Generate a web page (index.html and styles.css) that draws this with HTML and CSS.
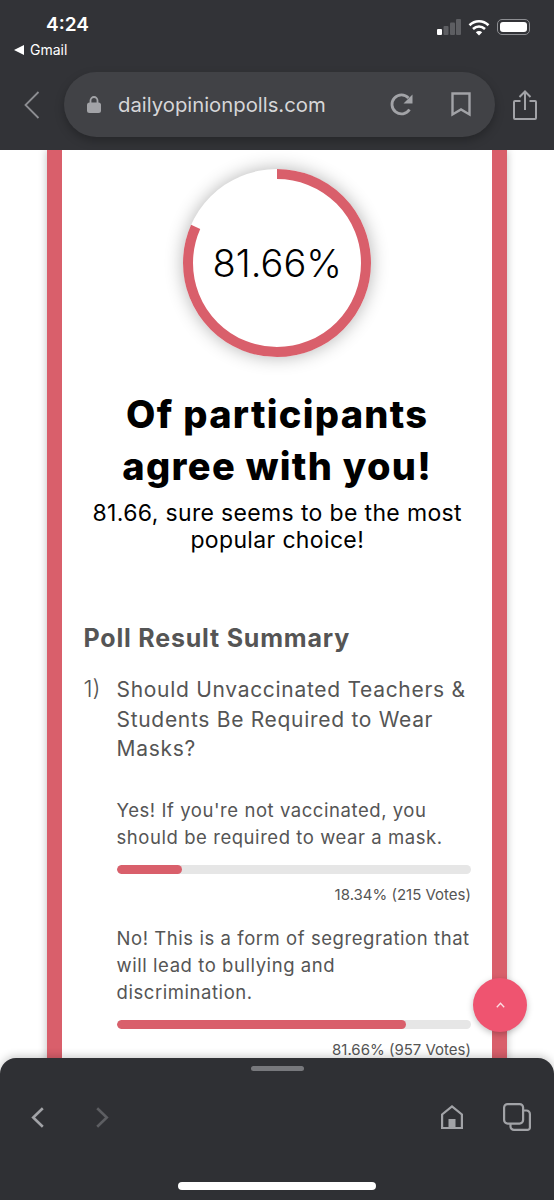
FILE: index.html
```html
<!DOCTYPE html>
<html lang="en">
  <head>
    <meta charset="UTF-8" />
    <meta name="viewport" content="width=device-width, initial-scale=1.0" />
    <title>Daily Opinion Polls</title>
    <link rel="stylesheet" href="styles.css">
  </head>
  <body>
    <header class="browser-top">
      <div class="status-bar">
        <div class="status-left">
          <div class="time">4:24</div>
          <div class="back-app"><span class="back-triangle"></span>Gmail</div>
        </div>
        <div class="status-right">
          <svg width="24" height="16" viewBox="0 0 24 16">
            <rect x="0" y="10" width="5" height="6" rx="1" fill="#fff" />
            <rect x="6.5" y="7" width="5" height="9" rx="1" fill="#5d5e62" />
            <rect x="13" y="3.5" width="5" height="12.5" rx="1" fill="#5d5e62" />
            <rect x="19" y="0" width="5" height="16" rx="1" fill="#5d5e62" />
          </svg>
          <svg width="22" height="17" viewBox="0 0 22 17" fill="none" stroke="#fff" stroke-width="2.6">
            <path d="M1.5 6.2C7 1 15 1 20.5 6.2" />
            <path d="M5 10C8.6 6.8 13.4 6.8 17 10" />
            <path d="M11 16.6 7.8 13.2C9.6 11.6 12.4 11.6 14.2 13.2Z" fill="#fff" stroke="none" />
          </svg>
          <div class="battery"><span class="battery-fill"></span></div>
        </div>
      </div>
      <div class="nav-bar">
        <svg class="nav-back" width="16" height="28" viewBox="0 0 16 28" fill="none" stroke="#8d8e92" stroke-width="1.8">
          <path d="M14.5 1 1.5 14l13 13" />
        </svg>
        <div class="url-pill">
          <svg width="14" height="17" viewBox="0 0 14 17">
            <path d="M3.5 7V4.5a3.5 3.5 0 0 1 7 0V7" fill="none" stroke="#a2a3a7" stroke-width="1.8" />
            <rect x="0" y="6.5" width="14" height="10.5" rx="2.5" fill="#a2a3a7" />
          </svg>
          <span class="url-text">dailyopinionpolls.com</span>
          <svg class="reload" width="24" height="24" viewBox="0 0 24 24" fill="none" stroke="#a2a3a7" stroke-width="2.8">
            <path d="M19.5 16.5A9.5 9.5 0 1 1 18.5 5" />
            <path d="M22.5 1.5V10.5H13.5Z" fill="#a2a3a7" stroke="none" />
          </svg>
          <svg class="bookmark" width="20" height="25" viewBox="0 0 20 25" fill="none" stroke="#a2a3a7" stroke-width="2.4">
            <path d="M1.5 1.5h17v21L10 17.5l-8.5 5Z" />
          </svg>
        </div>
        <svg class="share" width="24" height="30" viewBox="0 0 24 30" fill="none" stroke="#a2a3a7" stroke-width="2">
          <path d="M7.5 11H2a1 1 0 0 0-1 1v16a1 1 0 0 0 1 1h20a1 1 0 0 0 1-1V12a1 1 0 0 0-1-1h-5.5" />
          <path d="M12 20V2M6.5 7 12 1.5 17.5 7" />
        </svg>
      </div>
    </header>

    <main class="page">
      <div class="card">
        <div class="ring">
          <svg width="188" height="188" viewBox="0 0 188 188">
            <circle class="ring-arc" cx="94" cy="94" r="89" pathLength="100" stroke-dasharray="81.66 100" transform="rotate(-90 94 94)" />
          </svg>
          <div class="ring-value">81.66%</div>
        </div>
        <h1>Of participants<br />agree with you!</h1>
        <p class="subtitle">81.66, sure seems to be the most popular choice!</p>

        <h2>Poll Result Summary</h2>
        <div class="question">
          <span class="question-num">1)</span>
          <div class="question-body">
            <h3>Should Unvaccinated Teachers &amp; Students Be Required to Wear Masks?</h3>
            <div class="answer first">
              <p>Yes! If you're not vaccinated, you should be required to wear a mask.</p>
              <div class="bar"><div class="bar-fill" style="width: 18.34%"></div></div>
              <div class="votes">18.34% (215 Votes)</div>
            </div>
            <div class="answer">
              <p>No! This is a form of segregration that will lead to bullying and discrimination.</p>
              <div class="bar"><div class="bar-fill" style="width: 81.66%"></div></div>
              <div class="votes">81.66% (957 Votes)</div>
            </div>
          </div>
        </div>
      </div>
    </main>

    <button class="to-top">
      <svg width="9" height="6" viewBox="0 0 9 6" fill="none" stroke="#fbdfe4" stroke-width="1.3"><path d="M.8 5.2 4.5 1.2l3.700 4" /></svg>
    </button>

    <footer class="browser-bottom">
      <div class="handle"></div>
      <div class="tools">
        <div class="tools-left">
          <svg width="13" height="21" viewBox="0 0 13 21" fill="none" stroke="#a2a3a7" stroke-width="2.6"><path d="M11.8 1.2 2.2 10.5l9.6 9.3" /></svg>
          <svg width="13" height="21" viewBox="0 0 13 21" fill="none" stroke="#5d5e62" stroke-width="2.6"><path d="M1.2 1.2 10.800 10.500l-9.600 9.300" /></svg>
        </div>
        <div class="tools-right">
          <svg width="22" height="24" viewBox="0 0 22 24" fill="none" stroke="#a2a3a7" stroke-width="2.2">
            <path d="M1.1 23V9.5L11 1.500l9.900 8V23Z" />
            <rect x="7.5" y="14" width="7" height="9" fill="#a2a3a7" stroke="none" />
          </svg>
          <svg width="28" height="28" viewBox="0 0 28 28" fill="none" stroke="#a2a3a7" stroke-width="2.2">
            <rect x="1.1" y="1.1" width="19" height="19.5" rx="3.5" />
            <path d="M20.1 7.5H23.400a3.500 3.500 0 0 1 3.500 3.500v13.400a2.500 2.500 0 0 1-2.500 2.500H11a3.500 3.500 0 0 1-3.500-3.500v-2.800" />
          </svg>
        </div>
      </div>
      <div class="home-bar"></div>
    </footer>
  </body>
</html>
```

FILE: styles.css
```css
* {
  margin: 0;
  padding: 0;
  box-sizing: border-box;
}

html,
body {
  height: 1200px;
  overflow: hidden;
}

body {
  font-family: Inter, "Open Sans", sans-serif;
  background-color: #fff;
  color: #555;
  display: flex;
  flex-direction: column;
  position: relative;
}

svg {
  display: block;
  flex: none;
}

/* top browser chrome */
.browser-top {
  flex: none;
  height: 150px;
  background-color: #323337;
  color: #fff;
}

.status-bar {
  height: 72px;
  display: flex;
  justify-content: space-between;
  padding: 13px 24px 0 14px;
}

.time {
  font-size: 19px;
  font-weight: 600;
  line-height: 23px;
  padding-left: 32px;
}

.back-app {
  display: flex;
  align-items: center;
  gap: 6px;
  font-size: 14px;
  line-height: 18px;
  margin-top: 5px;
}

.back-triangle {
  width: 0;
  height: 0;
  border-top: 5px solid transparent;
  border-bottom: 5px solid transparent;
  border-right: 10px solid #fff;
}

.status-right {
  display: flex;
  align-items: center;
  gap: 7px;
  height: 28px;
}

.battery {
  width: 33px;
  height: 16px;
  border: 1px solid #8d8e92;
  border-radius: 5px;
  padding: 2px;
}

.battery-fill {
  display: block;
  height: 100%;
  background-color: #fff;
  border-radius: 3px;
}

.nav-bar {
  height: 65px;
  display: flex;
  align-items: center;
  padding-left: 24px;
}

.nav-back {
  margin-right: 24px;
}

.url-pill {
  width: 431px;
  height: 65px;
  flex: none;
  background-color: #414246;
  border-radius: 33px;
  box-shadow: 0 4px 10px rgba(0, 0, 0, 0.25);
  display: flex;
  align-items: center;
  padding-left: 23px;
}

.url-text {
  font-size: 20.3px;
  color: #d6d6d8;
  margin-left: 17px;
  width: 272px;
}

.bookmark {
  margin-left: 37px;
}

.share {
  margin-left: 18px;
}

/* page */
.page {
  flex: 1;
  min-height: 0;
  overflow: hidden;
  padding: 0 47px;
}

.card {
  border-left: 15.5px solid #d95f6b;
  border-right: 15.5px solid #d95f6b;
  box-shadow: 0 0 8px rgba(0, 0, 0, 0.25);
  background-color: #fff;
  padding: 19px 21px 0 21.5px;
  height: 1100px;
}

.ring {
  width: 188px;
  height: 188px;
  margin: 0 auto;
  border-radius: 50%;
  box-shadow: 0 0 18px rgba(0, 0, 0, 0.3);
  display: grid;
  place-items: center;
}

.ring svg,
.ring-value {
  grid-area: 1 / 1;
}

.ring-arc {
  fill: none;
  stroke: #d95f6b;
  stroke-width: 10;
}

.ring-value {
  font-size: 38px;
  font-weight: 300;
  color: #000;
}

h1 {
  font-size: 38px;
  line-height: 52px;
  font-weight: 800;
  letter-spacing: 1.3px;
  color: #000;
  text-align: center;
  margin-top: 31px;
}

.subtitle {
  font-size: 23px;
  line-height: 27px;
  letter-spacing: 0.35px;
  color: #000;
  text-align: center;
  margin-top: 8px;
}

h2 {
  font-size: 25px;
  line-height: 34px;
  font-weight: 700;
  letter-spacing: 0.8px;
  margin-top: 67px;
}

.question {
  display: flex;
  margin-top: 20px;
}

.question-num {
  flex: none;
  width: 33px;
  font-size: 23px;
  line-height: 29.5px;
  font-weight: 300;
}

.question-body {
  flex: 1;
  min-width: 0;
}

h3 {
  font-size: 21px;
  line-height: 29.5px;
  font-weight: 400;
  letter-spacing: 0.7px;
}

.answer {
  margin-top: 20px;
}

.answer.first {
  margin-top: 33px;
}

.answer p {
  font-size: 18.5px;
  line-height: 27px;
  letter-spacing: 0.56px;
}

.bar {
  height: 9px;
  margin-top: 14px;
  background-color: #e6e6e6;
  border-radius: 5px;
  overflow: hidden;
}

.bar-fill {
  height: 100%;
  background-color: #d95f6b;
  border-radius: 5px;
}

.votes {
  font-size: 15px;
  line-height: 20px;
  text-align: right;
  margin-top: 11px;
}

/* floating button and bottom sheet sit over the page */
.to-top {
  position: absolute;
  left: 473px;
  top: 978px;
  width: 54px;
  height: 54px;
  border: none;
  border-radius: 50%;
  background-color: #ef5470;
  box-shadow: 0 2px 6px rgba(0, 0, 0, 0.25);
  display: flex;
  align-items: center;
  justify-content: center;
}

.browser-bottom {
  position: absolute;
  left: 0;
  right: 0;
  bottom: 0;
  height: 142px;
  background-color: #2f3034;
  border-radius: 16px 16px 0 0;
  box-shadow: 0 -2px 8px rgba(0, 0, 0, 0.2);
  display: flex;
  flex-direction: column;
  align-items: center;
}

.handle {
  width: 53px;
  height: 5px;
  margin-top: 8px;
  border-radius: 3px;
  background-color: #77787c;
}

.tools {
  align-self: stretch;
  display: flex;
  justify-content: space-between;
  align-items: center;
  margin-top: 32px;
  padding: 0 23px 0 31px;
}

.tools-left {
  display: flex;
  gap: 52px;
}

.tools-right {
  display: flex;
  align-items: center;
  gap: 40px;
}

.home-bar {
  width: 198px;
  height: 8px;
  margin-top: auto;
  margin-bottom: 10px;
  border-radius: 4px;
  background-color: #fff;
}
```
